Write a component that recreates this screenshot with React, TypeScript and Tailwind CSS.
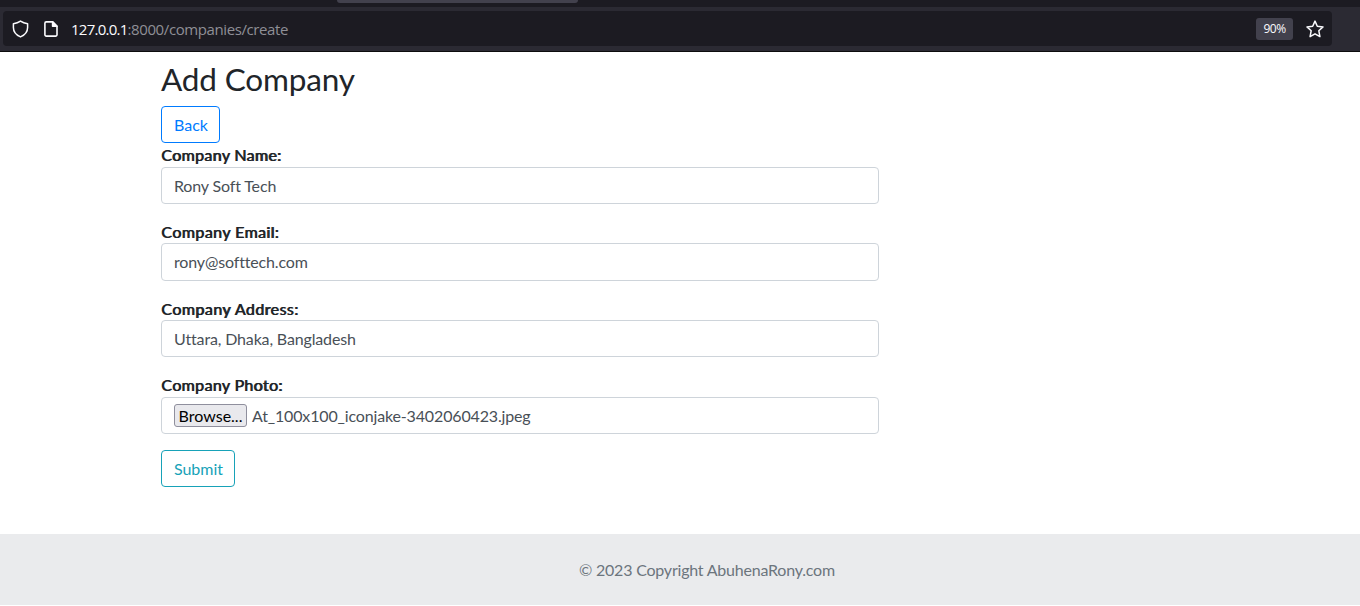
import React from "react";

type FieldProps = { label: string; labelClass: string; children: React.ReactNode };

function Field({ label, labelClass, children }: FieldProps) {
  return (
    <label className="block">
      <span
        className={`flex items-center whitespace-nowrap text-[#212529] [text-shadow:0.8px_0_0_#212529] ${labelClass}`}
      >
        <span>{label}</span>
      </span>
      {children}
    </label>
  );
}

const control =
  "block w-full rounded-[4px] border border-[#ced4da] bg-white px-3 tracking-[-0.15px] text-[#495057] outline-none";

export default function App() {
  return (
    <div className="flex h-[606px] w-[1360px] flex-col overflow-hidden bg-white font-['Lato',sans-serif] text-[16px]">
      <header className="flex h-[52px] shrink-0 flex-col border-b border-[#0c0c0d] bg-[#2b2a33]">
        <div className="h-[7px] bg-[#1c1b22] pl-[337px]">
          <div className="h-[3px] w-[241px] rounded-b-[3px] bg-[#42414d]" />
        </div>
        <div className="ml-[3px] mt-[4px] flex h-[35px] w-[1329px] items-center rounded-[4px] bg-[#1c1b22] text-[#fbfbfe]">
          <svg className="ml-[9px] h-[18px] w-[17px]" viewBox="0 0 17 18" fill="none" stroke="currentColor" strokeWidth="1.5" strokeLinejoin="round">
            <path d="M8.5 1.1 C6.5 2.5 4 3.4 1.4 3.8 V7.5 C1.4 12 4.5 15.2 8.5 16.9 C12.5 15.2 15.6 12 15.6 7.5 V3.8 C13 3.4 10.5 2.5 8.5 1.1Z" />
          </svg>
          <svg className="ml-[15px] h-[16px] w-[14px]" viewBox="0 0 14 16" fill="none" stroke="currentColor" strokeWidth="1.6" strokeLinejoin="round">
            <path d="M2.3 .9H8.6L13 5.3V13.7A1.4 1.4 0 0 1 11.6 15.1H2.3A1.4 1.4 0 0 1 .9 13.7V2.3A1.4 1.4 0 0 1 2.3 .9Z" />
            <path d="M8.6 .9V5.3H13Z" fill="currentColor" />
          </svg>
          <span className="ml-[13px] whitespace-nowrap pt-px font-['Open_Sans',sans-serif] text-[15px] tracking-[-0.4px] text-[#8f8f96]">
            <span className="tracking-[-0.75px] text-[#fbfbfe]">127.0.0.1</span>:8000/companies/create
          </span>
          <span className="ml-auto flex h-[22px] w-[37px] items-center justify-center rounded-[3px] bg-[#42414d] pt-px font-['Open_Sans',sans-serif] text-[12px] tracking-[-0.5px]">
            90%
          </span>
          <svg className="ml-[13px] mr-[8px] h-[18px] w-[18px]" viewBox="0 0 18 18" fill="none" stroke="currentColor" strokeWidth="1.5" strokeLinejoin="round">
            <path d="M9 1.1 11.3 6.2 17 6.9 12.8 10.7 13.9 16.6 9 13.8 4.1 16.6 5.2 10.7 1 6.9 6.7 6.2Z" />
          </svg>
        </div>
      </header>

      <main className="ml-[161px] w-[718px] flex-1">
        <h1 className="flex h-[54px] items-center text-[31.5px] leading-[38px] tracking-[-0.15px] text-[#212529]">Add Company</h1>
        <button className="block h-[37px] w-[59px] rounded-[4px] border border-[#007bff] pl-px pt-px text-[#007bff]">Back</button>
        <form onSubmit={(e) => e.preventDefault()}>
          <Field label="Company Name:" labelClass="h-[24px] pb-px tracking-[0.33px]">
            <input className={`${control} h-[37px]`} defaultValue="Rony Soft Tech" />
          </Field>
          <Field label="Company Email:" labelClass="h-[39px] pt-[17px] tracking-[0.42px]">
            <input className={`${control} h-[38px] pb-px`} defaultValue="rony@softtech.com" />
          </Field>
          <Field label="Company Address:" labelClass="h-[39px] pt-[17px] tracking-[0.45px]">
            <input className={`${control} h-[37px]`} defaultValue="Uttara, Dhaka, Bangladesh" />
          </Field>
          <Field label="Company Photo:" labelClass="h-[40px] pt-[15px] tracking-[0.35px]">
            <span className={`${control} h-[37px]`}>
              <span className="flex h-full items-center">
                <span className="flex h-[23px] w-[73px] items-center justify-center rounded-[3px] border border-[#8f8f9d] bg-[#e9e9ed] tracking-normal text-black">
                  Browse...
                </span>
                <span className="ml-[5px] pt-px">At_100x100_iconjake-3402060423.jpeg</span>
              </span>
            </span>
          </Field>
          <button className="mt-4 block h-[37px] w-[74px] rounded-[4px] border border-[#17a2b8] pl-px pt-px text-[#17a2b8]">Submit</button>
        </form>
      </main>

      <footer className="mb-px flex h-[71px] shrink-0 items-center bg-[#eaebed] pl-[579px] tracking-[-0.21px] text-[#6c757d]">
        <p>© 2023 Copyright AbuhenaRony.com</p>
      </footer>
    </div>
  );
}
